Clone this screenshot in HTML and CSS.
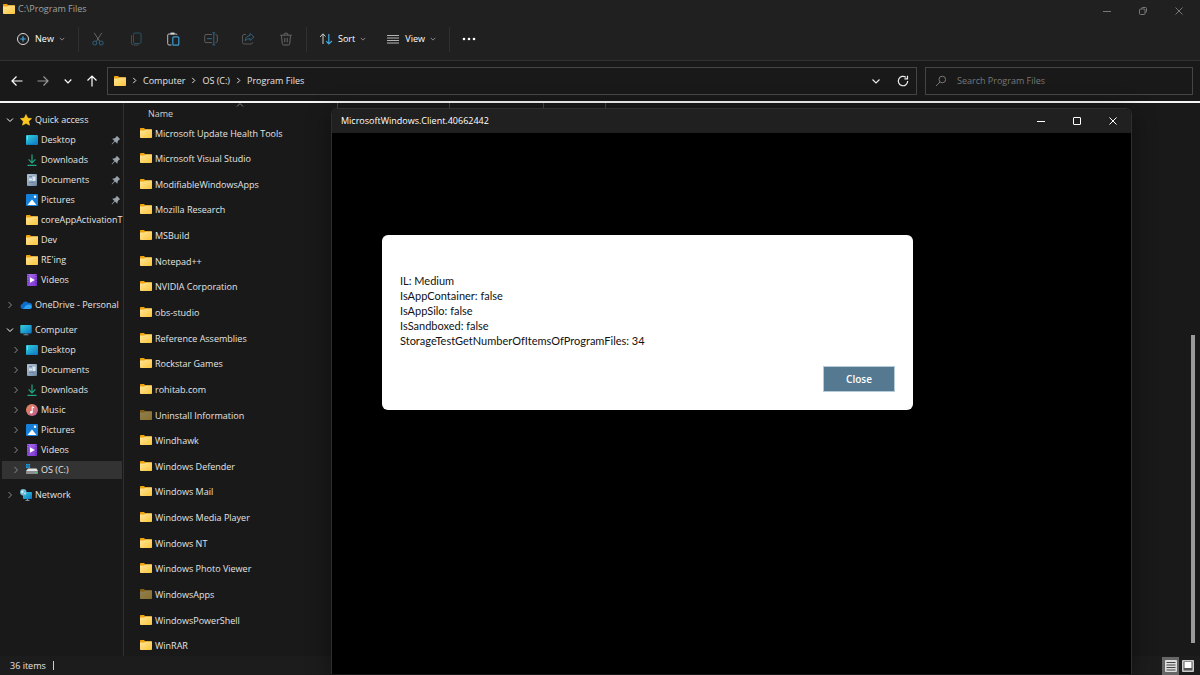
FILE: index.html
```html
<!DOCTYPE html>
<html lang="en">
<head>
    <meta charset="UTF-8">
    <meta name="viewport" content="width=device-width, initial-scale=1.0">
    <title>C:\Program Files</title>
    <link rel="stylesheet" href="styles.css">
</head>
<body>
    <!-- Shared icons -->
    <svg class="sprite" xmlns="http://www.w3.org/2000/svg">
        <defs>
            <linearGradient id="g-folder" x1="0" y1="0" x2="1" y2="1"><stop offset="0" stop-color="#ffe69a"/><stop offset="1" stop-color="#fcc53a"/></linearGradient>
            <linearGradient id="g-screen" x1="0" y1="0" x2="1" y2="1"><stop offset="0" stop-color="#35d0dc"/><stop offset="1" stop-color="#0b74c4"/></linearGradient>
            <linearGradient id="g-doc" x1="0" y1="0" x2="1" y2="1"><stop offset="0" stop-color="#b4c6d8"/><stop offset="1" stop-color="#6d86a3"/></linearGradient>
            <linearGradient id="g-music" x1="0" y1="0" x2="1" y2="1"><stop offset="0" stop-color="#f08a50"/><stop offset="1" stop-color="#b95a9c"/></linearGradient>
            <linearGradient id="g-video" x1="0" y1="0" x2="1" y2="1"><stop offset="0" stop-color="#a86cf0"/><stop offset="1" stop-color="#7c34d0"/></linearGradient>
        </defs>
        <symbol id="folder" viewBox="0 0 12 10"><path d="M0 .8Q0 0 .8 0H4l1.2 1.2h6q.8 0 .8.8v5H0z" fill="#f0a30a"/><path d="M0 2.6h4.2l1.2-1H12v7.6q0 .8-.8.8H.8Q0 10 0 9.200z" fill="url(#g-folder)"/></symbol>
        <symbol id="star" viewBox="0 0 12 12"><path d="M6 .5l1.700 3.600 3.900.5-2.900 2.700.8 3.900L6 9.300l-3.500 1.900.8-3.900L.4 4.600l3.900-.5z" fill="#ffc81e" stroke="#ffc81e" stroke-width=".6" stroke-linejoin="round"/></symbol>
        <symbol id="desktop" viewBox="0 0 12 12"><rect y="1" width="12" height="10" rx="1" fill="url(#g-screen)"/><path d="M1.500 2.500v1M1.500 4.500v1" stroke="#d8fbff" stroke-width=".8"/><path d="M1 10.300h8" stroke="#0a6bb0" stroke-width=".6"/></symbol>
        <symbol id="download" viewBox="0 0 12 12"><path d="M6 .5v8M2.600 5.400L6 8.800l3.400-3.400M1.500 11.300h9" fill="none" stroke="#1fa883" stroke-width="1.200"/></symbol>
        <symbol id="document" viewBox="0 0 12 12"><rect x="1" width="10" height="12" rx="1" fill="url(#g-doc)"/><path d="M3 2.500h3M3 8.500h5" stroke="#5f7690" stroke-width=".7"/><rect x="3" y="4.500" width="3" height="2" fill="#dce7f0"/><rect x="6.500" y="2.500" width="3" height="4.500" fill="#dce7f0"/></symbol>
        <symbol id="picture" viewBox="0 0 12 12"><rect width="12" height="12" rx="1" fill="#1680d8"/><path d="M1.500 11L6 5.500l4.500 5.500z" fill="#fff"/><circle cx="9" cy="2.800" r="1.200" fill="#fff"/></symbol>
        <symbol id="video" viewBox="0 0 12 12"><rect x="1" width="10" height="12" rx="1" fill="url(#g-video)"/><path d="M2 1v10M10 1v10" stroke="#4b1b94" stroke-dasharray="1.200 1.200"/><path d="M4 3.200v5.600L8.800 6z" fill="#fff"/></symbol>
        <symbol id="music" viewBox="0 0 12 12"><circle cx="6" cy="6" r="6" fill="url(#g-music)"/><path d="M6.200 8.300V2.800l2 1" fill="none" stroke="#fff" stroke-width="1"/><circle cx="5.200" cy="8.300" r="1.300" fill="#fff"/></symbol>
        <symbol id="cloud" viewBox="0 0 12 12"><path d="M3 10a2.600 2.600 0 0 1-.6-5.100A3.500 3.500 0 0 1 8.600 4 3 3 0 0 1 10 10z" fill="#0f6cc8"/><path d="M3 10l2.800-3.500q1.700-1.200 3.600-1A2.300 2.300 0 0 1 10 10z" fill="#2aa3f0"/></symbol>
        <symbol id="computer" viewBox="0 0 12 12"><rect x=".3" y="1" width="11.400" height="8.400" rx=".8" fill="url(#g-screen)"/><path d="M3.500 10.800h5M6 9.400v1.400" stroke="#7c93a3" stroke-width=".9"/></symbol>
        <symbol id="drive" viewBox="0 0 12 12"><path d="M2 4.500h8.500L12 7H0z" fill="#e4e7e8"/><rect y="7" width="12" height="3" rx=".8" fill="#8b8f91"/><path d="M9 8.500h2" stroke="#38d27a"/><path d="M0 0h1.800v1.800H0zM2.300 0h1.800v1.800H2.300zM0 2.300h1.800v1.800H0zM2.300 2.300h1.800v1.800H2.300z" fill="#1b9de8"/></symbol>
        <symbol id="network" viewBox="0 0 12 12"><rect x="3" y="3" width="9" height="7" rx=".7" fill="url(#g-screen)"/><path d="M5.500 11.400h4M7.500 10v1.400" stroke="#8fa5b3" stroke-width=".9"/><circle cx="3.300" cy="3.300" r="3.200" fill="#6bb9dc"/><path d="M1 2.500q2-2 2.500-.5T2 4.800zM4 4l2-.5-1 2z" fill="#d8f1f8"/></symbol>
        <symbol id="pin" viewBox="0 0 10 10"><path d="M5.800.8L9.200 4.200 8 4.800 6.800 6.200 6.200 8.800 4 6.600 1 9.400.6 9l2.800-3L1.200 3.800l2.600-.6L5.200 2z" fill="#9aa3aa"/></symbol>
        <symbol id="chev-right" viewBox="0 0 8 8"><path d="M2.500 1l3 3-3 3" fill="none" stroke="currentColor"/></symbol>
        <symbol id="chev-down" viewBox="0 0 8 8"><path d="M1 2.500l3 3 3-3" fill="none" stroke="currentColor"/></symbol>
        <symbol id="min" viewBox="0 0 10 10"><path d="M1 5.500h8" stroke="currentColor"/></symbol>
        <symbol id="close" viewBox="0 0 10 10"><path d="M1.500 1.500l7 7M8.500 1.500l-7 7" stroke="currentColor"/></symbol>
    </svg>

    <div class="explorer">
        <header class="titlebar">
            <svg class="ico"><use href="#folder"/></svg>
            <h1>C:\Program Files</h1>
            <div class="caption-buttons">
                <button aria-label="Minimize"><svg><use href="#min"/></svg></button>
                <button aria-label="Restore"><svg viewBox="0 0 10 10"><path d="M3.500 3V2.500q0-1 1-1h3q1 0 1 1v3q0 1-1 1H7" fill="none" stroke="currentColor"/><rect x="1.500" y="3" width="5.500" height="5.500" rx="1" fill="none" stroke="currentColor"/></svg></button>
                <button aria-label="Close"><svg><use href="#close"/></svg></button>
            </div>
        </header>

        <!-- Command bar -->
        <div class="toolbar">
            <button class="cmd cmd-new"><svg class="glyph" viewBox="0 0 14 14" fill="none"><circle cx="7" cy="7" r="5.500" stroke="#ddd"/><path d="M7 4.200v5.600M4.200 7h5.600" stroke="#3fa7dc" stroke-width="1.200"/></svg>New<svg class="caret"><use href="#chev-down"/></svg></button>
            <div class="tools">
                <button aria-label="Cut"><svg class="glyph" viewBox="0 0 14 14" fill="none"><path d="M3.200.8l5.500 8.600M10.800.8L5.300 9.400" stroke="#666"/><circle cx="3.800" cy="11" r="2" stroke="#2f6380"/><circle cx="10.200" cy="11" r="2" stroke="#2f6380"/></svg></button>
                <button aria-label="Copy"><svg class="glyph" viewBox="0 0 14 14" fill="none"><rect x="4.500" y="1" width="7.500" height="10.500" rx="1.300" stroke="#2b5368"/><path d="M2.500 3v8q0 2 2 2H9.500" stroke="#4a4a4a"/></svg></button>
                <button aria-label="Paste"><svg class="glyph" viewBox="0 0 14 14" fill="none"><path d="M5.500 13H3q-1.300 0-1.300-1.300V3Q1.700 2 3 2h7q1 0 1 1" stroke="#bbb"/><path d="M4.500 1.500h4" stroke="#ddd" stroke-width="1.800"/><rect x="6.800" y="4.800" width="6" height="8.400" rx="1" stroke="#3c9bd0" stroke-width="1.200"/></svg></button>
                <button aria-label="Rename"><svg class="glyph" viewBox="0 0 14 14" fill="none"><path d="M8 2.500H2q-1.300 0-1.300 1.300v5.500q0 1.300 1.300 1.300h6" stroke="#5c5c5c"/><path d="M11.500 2.500q1.800 0 1.800 1.500v5.200q0 1.400-1.800 1.400" stroke="#5c5c5c"/><path d="M3 6.700h5M9.800 1v11.500M8.500.8h2.600M8.500 12.800h2.600" stroke="#2f6c8e"/></svg></button>
                <button aria-label="Share"><svg class="glyph" viewBox="0 0 14 14" fill="none"><path d="M5 2.500H3Q1.500 2.500 1.500 4v6.500Q1.500 12 3 12h7q1.500 0 1.500-1.500V10" stroke="#555"/><path d="M9 1.500L13 5 9 8.500V6.600Q6 6.500 4.200 8.800 4.500 4 9 3.500z" stroke="#2f6380" stroke-linejoin="round"/></svg></button>
                <button aria-label="Delete"><svg class="glyph" viewBox="0 0 14 14" fill="none"><path d="M1.200 3.200h11.600M5 3Q5 1 7 1t2 2M2.500 3.500l.8 8.200q.1 1.300 1.300 1.300h4.800q1.200 0 1.300-1.300l.8-8.200M5.800 5.800v4.500M8.200 5.800v4.500" stroke="#686868"/></svg></button>
            </div>
            <div class="view-tools">
                <button class="cmd"><svg class="glyph" viewBox="0 0 14 14" fill="none"><path d="M4 12V2M1 5l3-3.200 2.500 2.700" stroke="#ccc"/><path d="M9.800 2v10M7.200 9.200l2.600 2.800L13 9" stroke="#3fa7dc" stroke-width="1.200"/></svg>Sort<svg class="caret"><use href="#chev-down"/></svg></button>
                <button class="cmd"><svg class="glyph" viewBox="0 0 14 14"><path d="M1 3.500h12M1 6h12M1 8.500h12M1 11h12" stroke="#b5b5b5"/></svg>View<svg class="caret"><use href="#chev-down"/></svg></button>
            </div>
            <button class="more" aria-label="See more"><svg class="glyph" viewBox="0 0 14 14"><g fill="#fff"><circle cx="2" cy="7" r="1.300"/><circle cx="7" cy="7" r="1.300"/><circle cx="12" cy="7" r="1.300"/></g></svg></button>
        </div>

        <!-- Address bar -->
        <div class="address-row">
            <div class="nav-buttons">
                <button class="wide" aria-label="Back"><svg viewBox="0 0 12 12"><path d="M11.500 6H1.200M5.500 1.500L1 6l4.500 4.500" fill="none" stroke="#fff" stroke-width="1.200"/></svg></button>
                <button class="wide" aria-label="Forward"><svg viewBox="0 0 12 12"><path d="M.5 6h10.300M6.500 1.500L11 6l-4.500 4.500" fill="none" stroke="#999" stroke-width="1.200"/></svg></button>
                <button aria-label="Recent locations"><svg viewBox="0 0 12 12"><path d="M2.700 4.500L6 7.800l3.300-3.300" fill="none" stroke="#fff" stroke-width="1.200"/></svg></button>
                <button aria-label="Up"><svg viewBox="0 0 12 12"><path d="M6 11.500V1.200M1.500 5.500L6 1l4.500 4.500" fill="none" stroke="#fff" stroke-width="1.200"/></svg></button>
            </div>
            <nav class="address">
                <svg class="ico"><use href="#folder"/></svg>
                <svg class="crumb-sep"><use href="#chev-right"/></svg>
                <a href="#">Computer</a>
                <svg class="crumb-sep"><use href="#chev-right"/></svg>
                <a href="#">OS (C:)</a>
                <svg class="crumb-sep"><use href="#chev-right"/></svg>
                <a href="#">Program Files</a>
                <div class="address-buttons">
                    <button aria-label="Previous locations"><svg viewBox="0 0 12 12"><path d="M2.500 4.500L6 8l3.500-3.500" fill="none" stroke="#eee" stroke-width="1.100"/></svg></button>
                    <button aria-label="Refresh"><svg viewBox="0 0 12 12"><path d="M10.700 6A4.700 4.700 0 1 1 9 2.400M10.500.8v3H7.400" fill="none" stroke="#eee" stroke-width="1.200"/></svg></button>
                </div>
            </nav>
            <label class="search">
                <svg viewBox="0 0 12 12"><circle cx="7.300" cy="4.500" r="3.300" fill="none" stroke="#777"/><path d="M5 7L1 11" stroke="#777"/></svg>
                <input type="text" placeholder="Search Program Files" aria-label="Search Program Files">
            </label>
        </div>

        <div class="main">
            <!-- Navigation pane -->
            <nav class="sidebar">
                <div class="group">
                    <a href="#" class="root open"><svg class="chev"><use href="#chev-down"/></svg><svg class="ico"><use href="#star"/></svg>Quick access</a>
                    <a href="#"><span class="chev"></span><svg class="ico"><use href="#desktop"/></svg>Desktop<svg class="pin"><use href="#pin"/></svg></a>
                    <a href="#"><span class="chev"></span><svg class="ico"><use href="#download"/></svg>Downloads<svg class="pin"><use href="#pin"/></svg></a>
                    <a href="#"><span class="chev"></span><svg class="ico"><use href="#document"/></svg>Documents<svg class="pin"><use href="#pin"/></svg></a>
                    <a href="#"><span class="chev"></span><svg class="ico"><use href="#picture"/></svg>Pictures<svg class="pin"><use href="#pin"/></svg></a>
                    <a href="#"><span class="chev"></span><svg class="ico"><use href="#folder"/></svg>coreAppActivationT</a>
                    <a href="#"><span class="chev"></span><svg class="ico"><use href="#folder"/></svg>Dev</a>
                    <a href="#"><span class="chev"></span><svg class="ico"><use href="#folder"/></svg>RE'ing</a>
                    <a href="#"><span class="chev"></span><svg class="ico"><use href="#video"/></svg>Videos</a>
                </div>
                <div class="group">
                    <a href="#" class="root"><svg class="chev"><use href="#chev-right"/></svg><svg class="ico"><use href="#cloud"/></svg>OneDrive - Personal</a>
                </div>
                <div class="group">
                    <a href="#" class="root open"><svg class="chev"><use href="#chev-down"/></svg><svg class="ico"><use href="#computer"/></svg>Computer</a>
                    <a href="#"><svg class="chev"><use href="#chev-right"/></svg><svg class="ico"><use href="#desktop"/></svg>Desktop</a>
                    <a href="#"><svg class="chev"><use href="#chev-right"/></svg><svg class="ico"><use href="#document"/></svg>Documents</a>
                    <a href="#"><svg class="chev"><use href="#chev-right"/></svg><svg class="ico"><use href="#download"/></svg>Downloads</a>
                    <a href="#"><svg class="chev"><use href="#chev-right"/></svg><svg class="ico"><use href="#music"/></svg>Music</a>
                    <a href="#"><svg class="chev"><use href="#chev-right"/></svg><svg class="ico"><use href="#picture"/></svg>Pictures</a>
                    <a href="#"><svg class="chev"><use href="#chev-right"/></svg><svg class="ico"><use href="#video"/></svg>Videos</a>
                    <a href="#" class="selected"><svg class="chev"><use href="#chev-right"/></svg><svg class="ico"><use href="#drive"/></svg>OS (C:)</a>
                </div>
                <div class="group">
                    <a href="#" class="root"><svg class="chev"><use href="#chev-right"/></svg><svg class="ico"><use href="#network"/></svg>Network</a>
                </div>
            </nav>

            <!-- File list -->
            <div class="files">
                <div class="columns">
                    <div class="col-name">Name<svg class="sort-mark" viewBox="0 0 8 4"><path d="M1 3.500l3-3 3 3" fill="none" stroke="#999" stroke-width=".8"/></svg></div>
                    <div class="col-date"></div>
                    <div class="col-type"></div>
                    <div class="col-size"></div>
                </div>
                <ul class="file-list">
                    <li><svg class="ico"><use href="#folder"/></svg>Microsoft Update Health Tools</li>
                    <li><svg class="ico"><use href="#folder"/></svg>Microsoft Visual Studio</li>
                    <li><svg class="ico"><use href="#folder"/></svg>ModifiableWindowsApps</li>
                    <li><svg class="ico"><use href="#folder"/></svg>Mozilla Research</li>
                    <li><svg class="ico"><use href="#folder"/></svg>MSBuild</li>
                    <li><svg class="ico"><use href="#folder"/></svg>Notepad++</li>
                    <li><svg class="ico"><use href="#folder"/></svg>NVIDIA Corporation</li>
                    <li><svg class="ico"><use href="#folder"/></svg>obs-studio</li>
                    <li><svg class="ico"><use href="#folder"/></svg>Reference Assemblies</li>
                    <li><svg class="ico"><use href="#folder"/></svg>Rockstar Games</li>
                    <li><svg class="ico"><use href="#folder"/></svg>rohitab.com</li>
                    <li class="hidden-item"><svg class="ico"><use href="#folder"/></svg>Uninstall Information</li>
                    <li><svg class="ico"><use href="#folder"/></svg>Windhawk</li>
                    <li><svg class="ico"><use href="#folder"/></svg>Windows Defender</li>
                    <li><svg class="ico"><use href="#folder"/></svg>Windows Mail</li>
                    <li><svg class="ico"><use href="#folder"/></svg>Windows Media Player</li>
                    <li><svg class="ico"><use href="#folder"/></svg>Windows NT</li>
                    <li><svg class="ico"><use href="#folder"/></svg>Windows Photo Viewer</li>
                    <li class="hidden-item"><svg class="ico"><use href="#folder"/></svg>WindowsApps</li>
                    <li><svg class="ico"><use href="#folder"/></svg>WindowsPowerShell</li>
                    <li><svg class="ico"><use href="#folder"/></svg>WinRAR</li>
                </ul>
            </div>
            <div class="scrollbar"><div class="thumb"></div></div>
        </div>

        <footer class="status">
            <span class="count">36 items</span>
            <div class="view-switch">
                <button class="active" aria-label="Details view"><svg viewBox="0 0 14 14"><rect x="1" y="1" width="12" height="12" rx="1" fill="#ddd"/><path d="M2.500 3.500h9M2.500 6h9M2.500 8.500h9M2.500 11h9" stroke="#444"/></svg></button>
                <button aria-label="Large icons view"><svg viewBox="0 0 14 14"><rect x="1" y="1" width="12" height="12" rx="1" fill="#ccc"/><rect x="2.500" y="2.500" width="9" height="9" fill="#555"/><rect x="3.500" y="3" width="7" height="6" fill="#fff"/></svg></button>
            </div>
        </footer>
    </div>

    <!-- App window on top of the explorer -->
    <section class="client">
        <header class="client-title">
            <h2>MicrosoftWindows.Client.40662442</h2>
            <div class="caption-buttons">
                <button aria-label="Minimize"><svg><use href="#min"/></svg></button>
                <button aria-label="Maximize"><svg viewBox="0 0 10 10"><rect x="1.500" y="1.500" width="7" height="7" rx=".5" fill="none" stroke="currentColor"/></svg></button>
                <button aria-label="Close"><svg><use href="#close"/></svg></button>
            </div>
        </header>
        <div class="client-body">
            <div class="dialog" role="dialog" aria-label="Result">
                <p>IL: Medium<br>
                IsAppContainer: false<br>
                IsAppSilo: false<br>
                IsSandboxed: false<br>
                StorageTestGetNumberOfItemsOfProgramFiles: 34</p>
                <button class="close-btn">Close</button>
            </div>
        </div>
    </section>
</body>
</html>
```
FILE: styles.css
```css
* {
    box-sizing: border-box;
}
body {
    margin: 0;
    height: 100vh;
    overflow: hidden;
    position: relative;
    background-color: #191919;
    color: #e4e4e4;
    font-family: "Open Sans", "Noto Sans", sans-serif;
    font-size: 9px;
    line-height: 14px;
}
button {
    display: flex;
    align-items: center;
    justify-content: center;
    padding: 0;
    border: none;
    background: none;
    color: inherit;
    font: inherit;
}
a {
    color: inherit;
    text-decoration: none;
}
h1, h2, p, ul {
    margin: 0;
    padding: 0;
    font-size: inherit;
    font-weight: normal;
}
svg {
    flex: none;
}
.sprite {
    position: absolute;
    width: 0;
    height: 0;
}
.ico {
    width: 12px;
    height: 12px;
}

/* Explorer window */
.explorer {
    display: flex;
    flex-direction: column;
    height: 100%;
}
.titlebar {
    display: flex;
    align-items: center;
    gap: 3px;
    height: 18px;
    padding-left: 3px;
    background-color: #202020;
    color: #a0a0a0;
}
.caption-buttons {
    display: flex;
    margin-left: auto;
}
.caption-buttons button {
    width: 36px;
    height: 22px;
}
.caption-buttons svg {
    width: 10px;
    height: 10px;
}
.titlebar .caption-buttons {
    color: #777;
    padding: 4px 3px 0 0;
}

/* Command bar */
.toolbar {
    display: flex;
    align-items: center;
    height: 43px;
    background-color: #202020;
    border-bottom: 1px solid #303030;
    color: #fff;
}
.glyph {
    width: 14px;
    height: 14px;
}
.cmd {
    gap: 5px;
}
.caret {
    width: 6px;
    height: 6px;
    color: #aaa;
}
.cmd-new {
    width: 78px;
    padding-left: 3px;
}
.tools, .view-tools {
    display: flex;
    align-items: center;
    height: 25px;
    border-left: 1px solid #303030;
    border-right: 1px solid #303030;
}
.tools {
    width: 229px;
    justify-content: space-between;
    padding: 0 13px 0 12px;
}
.view-tools {
    width: 143px;
    border-left: none;
    justify-content: space-between;
    padding: 0 13px 0 12px;
}
.more {
    width: 38px;
}

/* Address bar */
.address-row {
    display: flex;
    align-items: center;
    gap: 8px;
    height: 42px;
    padding: 0 7px 1px 10px;
    border-bottom: 2px solid #f4f4f4;
}
.nav-buttons {
    display: flex;
    gap: 12px;
    width: 89px;
}
.nav-buttons .wide {
    width: 14px;
}
.nav-buttons svg, .address-buttons svg, .search svg {
    width: 12px;
    height: 12px;
}
.address, .search {
    display: flex;
    align-items: center;
    height: 28px;
    border: 1px solid #454545;
}
.address {
    flex: 1;
    gap: 6px;
    padding: 0 7px 0 6px;
}
.crumb-sep {
    width: 7px;
    height: 7px;
    margin: 0 -1px;
    color: #fff;
}
.address-buttons {
    display: flex;
    gap: 15px;
    margin-left: auto;
}
.search {
    width: 268px;
    gap: 10px;
    padding-left: 9px;
}
.search input {
    flex: 1;
    min-width: 0;
    padding: 0;
    border: none;
    outline: none;
    background: none;
    color: #fff;
    font: inherit;
}
.search input::placeholder {
    color: #777;
    opacity: 1;
}

/* Navigation pane */
.main {
    flex: 1;
    display: flex;
    min-height: 0;
}
.sidebar {
    display: flex;
    flex-direction: column;
    gap: 7px;
    width: 124px;
    padding: 8px 1px 0 2px;
    border-right: 1px solid #303030;
}
.group {
    display: flex;
    flex-direction: column;
    gap: 2px;
}
.group a {
    display: flex;
    align-items: center;
    gap: 3px;
    height: 18px;
    padding-left: 10px;
    white-space: nowrap;
}
.group .root {
    padding-left: 4px;
}
.group a:hover, .group .selected {
    background-color: #333;
}
.chev {
    width: 8px;
    height: 8px;
    margin-right: 3px;
    color: #8a8a8a;
    flex: none;
}
.open .chev {
    color: #fff;
}
.pin {
    width: 10px;
    height: 10px;
    margin: 0 1px 0 auto;
}

/* File list */
.files {
    flex: 1;
    display: flex;
    flex-direction: column;
}
.columns {
    display: flex;
    height: 21px;
    color: #cfcfcf;
}
.columns div {
    border-right: 1px solid #454545;
}
.col-name {
    display: flex;
    align-items: center;
    width: 214px;
    padding-left: 24px;
}
.sort-mark {
    align-self: flex-start;
    width: 8px;
    height: 4px;
    margin-left: 63px;
}
.col-date {
    width: 112px;
}
.col-type {
    width: 94px;
}
.col-size {
    width: 62px;
}
.file-list {
    flex: 1;
    display: flex;
    flex-direction: column;
    justify-content: space-between;
    list-style: none;
}
.file-list li {
    display: flex;
    align-items: center;
    gap: 3px;
    height: 19px;
    padding-left: 16px;
}
.file-list .ico {
    margin-bottom: 2px;
}
.hidden-item .ico {
    opacity: 0.5;
}
.scrollbar {
    display: flex;
    flex-direction: column;
    justify-content: flex-end;
    width: 9px;
    padding-bottom: 13px;
}
.thumb {
    width: 4px;
    height: 57%;
    background-color: #9a9a9a;
}

/* Status bar */
.status {
    display: flex;
    align-items: center;
    justify-content: space-between;
    height: 19px;
    padding: 0 4px 0 10px;
    background-color: #1c1c1c;
}
.count {
    padding-right: 7px;
    border-right: 1px solid #ccc;
    line-height: 9px;
}
.view-switch {
    display: flex;
}
.view-switch button {
    width: 17px;
    height: 18px;
}
.view-switch .active {
    background-color: #666;
}
.view-switch svg {
    width: 14px;
    height: 14px;
}

/* App window */
.client {
    position: absolute;
    top: 108px;
    right: 68px;
    bottom: 1px;
    left: 331px;
    display: flex;
    flex-direction: column;
    border: 1px solid #2e2e2e;
    border-bottom: none;
    border-radius: 6px 6px 0 0;
    background-color: #000;
    box-shadow: 0 4px 24px rgba(0, 0, 0, 0.4);
    overflow: hidden;
}
.client-title {
    display: flex;
    align-items: center;
    height: 24px;
    padding-left: 9px;
    background-color: #202020;
    color: #fff;
}
.client-body {
    flex: 1;
    padding: 102px 50px;
}
.dialog {
    display: flex;
    flex-direction: column;
    justify-content: space-between;
    max-width: 531px;
    height: 175px;
    padding: 38px 18px 18px;
    border-radius: 6px;
    background-color: #fff;
    color: #111;
    font-family: Lato, "Open Sans", sans-serif;
    font-size: 11px;
    line-height: 15px;
}
.close-btn {
    align-self: flex-end;
    width: 72px;
    height: 26px;
    border: 1px solid #b5cbd8;
    background-color: #557990;
    color: #fff;
    font-family: "Open Sans", sans-serif;
    font-size: 10px;
    font-weight: 600;
}
```
